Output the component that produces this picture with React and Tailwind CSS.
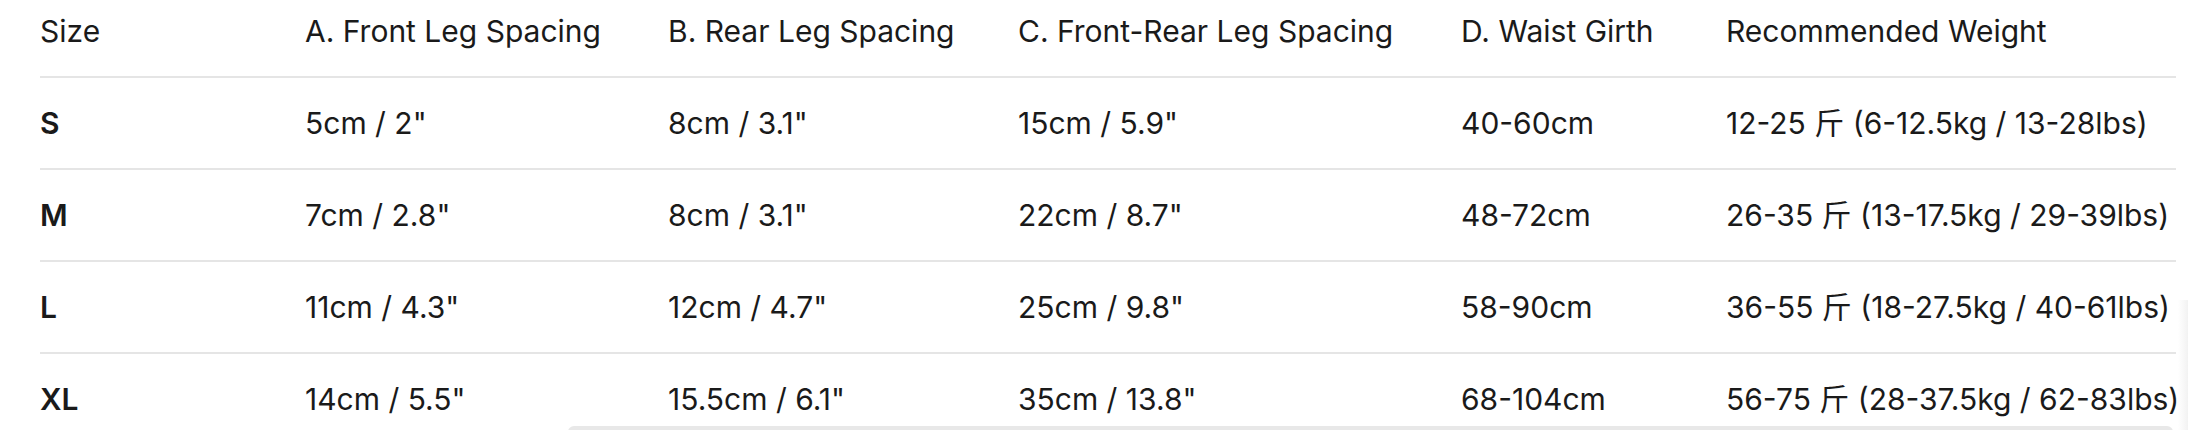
import React from "react";

const columns = [
  "Size",
  "A. Front Leg Spacing",
  "B. Rear Leg Spacing",
  "C. Front-Rear Leg Spacing",
  "D. Waist Girth",
  "Recommended Weight",
];

const rows = [
  ["S", "5cm / 2\"", "8cm / 3.1\"", "15cm / 5.9\"", "40-60cm", "12-25 斤 (6-12.5kg / 13-28lbs)"],
  ["M", "7cm / 2.8\"", "8cm / 3.1\"", "22cm / 8.7\"", "48-72cm", "26-35 斤 (13-17.5kg / 29-39lbs)"],
  ["L", "11cm / 4.3\"", "12cm / 4.7\"", "25cm / 9.8\"", "58-90cm", "36-55 斤 (18-27.5kg / 40-61lbs)"],
  ["XL", "14cm / 5.5\"", "15.5cm / 6.1\"", "35cm / 13.8\"", "68-104cm", "56-75 斤 (28-37.5kg / 62-83lbs)"],
];

const grid = "grid grid-cols-[265px_363px_350px_443px_265px_450px]";

export default function App() {
  return (
    <div
      className="relative h-[430px] overflow-hidden bg-white pl-[40px] pr-[12px] text-[30px] text-[#1a1a1a]"
      style={{ fontFamily: 'Inter, "Noto Sans CJK SC", sans-serif' }}
    >
      {/* header */}
      <div className={`${grid} border-b-2 border-[#e5e5e5] pt-[9px] pb-[22px] leading-[45px]`}>
        {columns.map((c) => (
          <div key={c} className="whitespace-nowrap">{c}</div>
        ))}
      </div>

      {/* body */}
      {rows.map((r) => (
        <div key={r[0]} className={`${grid} h-[92px] items-center border-b-2 border-[#e5e5e5] leading-[45px]`}>
          {r.map((cell, i) => (
            <div key={i} className={i === 0 ? "font-semibold whitespace-nowrap" : "whitespace-nowrap"}>
              {cell}
            </div>
          ))}
        </div>
      ))}

      {/* scrollbar thumb */}
      <div className="absolute left-[568px] top-[426px] h-[12px] w-[1605px] rounded-full bg-[#e8e8e8]" />
      <div className="absolute right-0 top-[300px] h-[130px] w-[10px] bg-gradient-to-r from-transparent to-[#f2f2f2]" />
    </div>
  );
}
